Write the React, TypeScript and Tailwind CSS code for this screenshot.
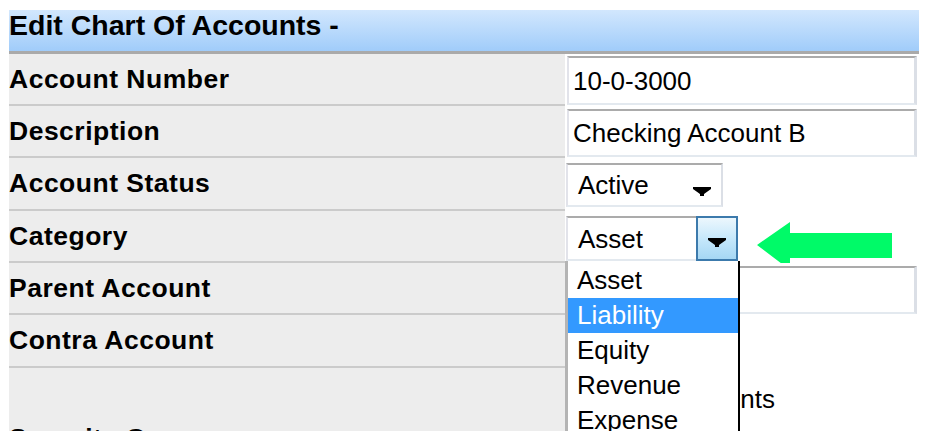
import React from "react";

const Arrow = () => (
  <svg width="18" height="9" viewBox="0 0 18 9" className="block">
    <polygon points="0,0 18,0 18,2 11,7 11,9 7,9 7,7 0,2" fill="#000" />
  </svg>
);

const TextBox = ({ value, mt, h }: { value: string; mt: string; h: string }) => (
  <div
    className={`${mt} ${h} ml-[2px] w-[350px] bg-white border-t-2 border-t-[#ababab] border-l-2 border-l-[#e2e3ea] border-r-[3px] border-r-[#dbdfe6] border-b-2 border-b-[#e3e9ef] flex items-center pl-[4px] text-[26px] text-black leading-none whitespace-nowrap`}
  >
    {value}
  </div>
);

const Label = ({ text, h }: { text: string; h: string }) => (
  <div
    className={`${h} bg-[#ededed] border-b-2 border-[#cbcbcb] flex items-center text-[26.5px] font-bold tracking-[0.5px] text-black leading-none whitespace-nowrap`}
  >
    {text}
  </div>
);

export default function App() {
  const items = ["Asset", "Liability", "Equity", "Revenue", "Expense", "Other"];
  return (
    <div className="w-[929px] h-[444px] bg-white overflow-hidden font-['Liberation_Sans',Arial,sans-serif]">
      <div className="ml-[9px] pt-[10px] w-[910px] h-[431px] overflow-hidden">
        {/* Header */}
        <div className="h-[44px] bg-gradient-to-b from-[#d2e7fd] to-[#a0ccfa] border-b-[3px] border-[#aaaaaa] text-[28.5px] font-bold leading-[28px] pt-[1px] text-black whitespace-nowrap">
          Edit Chart Of Accounts -
        </div>

        <div className="grid grid-cols-[556px_354px]">
          {/* Row 1 */}
          <Label text="Account Number" h="h-[52px]" />
          <div className="h-[52px] bg-white">
            <TextBox value="10-0-3000" mt="mt-[2px]" h="h-[49px]" />
          </div>

          {/* Row 2 */}
          <Label text="Description" h="h-[52px]" />
          <div className="h-[52px] bg-white">
            <TextBox value="Checking Account B" mt="mt-[3px]" h="h-[48px]" />
          </div>

          {/* Row 3 */}
          <Label text="Account Status" h="h-[53px]" />
          <div className="h-[53px] bg-white">
            <div className="mt-[5px] ml-[1px] w-[157px] h-[44px] bg-white border-t-2 border-t-[#ababab] border-l-2 border-l-[#e2e3ea] border-r-2 border-r-[#dbdfe6] border-b-2 border-b-[#e3e9ef] flex items-stretch justify-between text-[26px] leading-none">
              <span className="pl-[10px] flex items-center">Active</span>
              <span className="pr-[10px] pt-[22px]">
                <Arrow />
              </span>
            </div>
          </div>

          {/* Row 4 */}
          <Label text="Category" h="h-[52px]" />
          <div className="h-[52px] bg-white flex items-start">
            <div className="relative mt-[5px] ml-[1px] w-[172px] h-[45px] bg-white border-t-2 border-t-[#ababab] border-l-2 border-l-[#e2e3ea] border-b-2 border-b-[#e3e9ef] flex items-stretch text-[26px] leading-none">
              <span className="flex-1 pl-[10px] flex items-center">Asset</span>
              <span className="w-[42px] -mt-[2px] -mb-[2px] border-2 border-[#3c7aac] bg-gradient-to-b from-[#ecf7fd] via-[#c6e8fb] to-[#a5d7f4] flex justify-center pt-[20px]">
                <Arrow />
              </span>
              {/* Dropdown list */}
              <div className="absolute z-10 left-[-3px] top-[43px] w-[175px] h-[240px] bg-white border-l-[3px] border-l-[#b4b4b4] border-r-2 border-r-black pt-[2px]">
                {items.map((it) => (
                  <div
                    key={it}
                    className={`h-[35px] leading-[35px] pl-[9px] text-[26px] whitespace-nowrap ${
                      it === "Liability" ? "bg-[#3399ff] text-white" : "text-black"
                    }`}
                  >
                    {it}
                  </div>
                ))}
              </div>
            </div>
            <svg width="135" height="48" viewBox="0 0 135 48" className="mt-[11px] ml-[19px] block">
              <polygon points="0,23 33,0 33,11 135,11 135,36 33,36 33,48" fill="#00fa68" />
            </svg>
          </div>

          {/* Row 5 */}
          <Label text="Parent Account" h="h-[52px]" />
          <div className="h-[52px] bg-white">
            <TextBox value="" mt="mt-[3px]" h="h-[48px]" />
          </div>

          {/* Row 6 */}
          <Label text="Contra Account" h="h-[53px]" />
          <div className="h-[53px] bg-white" />

          {/* Row 7 */}
          <div className="h-[80px] bg-[#ededed] pt-[55px] text-[26.5px] font-bold tracking-[0.5px] leading-[30px] whitespace-nowrap">
            Security Group
          </div>
          <div className="h-[80px] bg-white pt-[16px] pl-[103px] text-[26px] leading-[30px] whitespace-nowrap">
            Accounts
          </div>
        </div>
      </div>
    </div>
  );
}
